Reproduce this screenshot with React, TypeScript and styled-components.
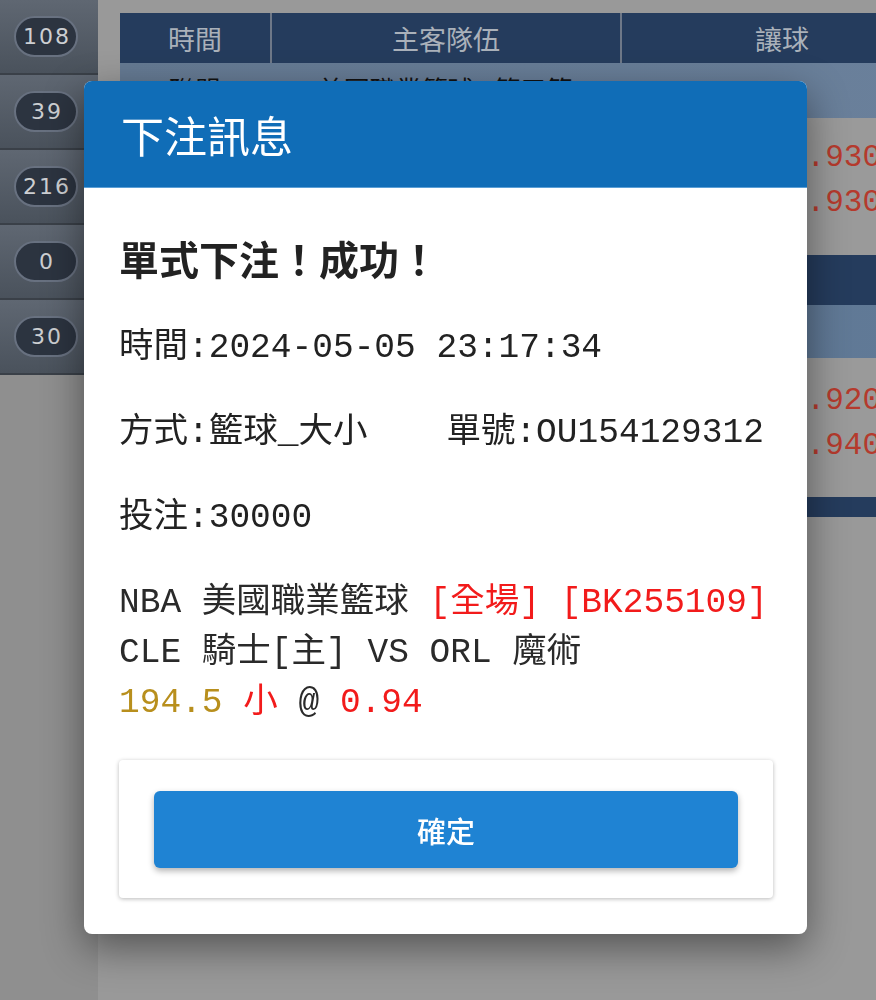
import React from "react";
import styled, { createGlobalStyle } from "styled-components";

const GlobalStyle = createGlobalStyle`
  html, body {
    margin: 0;
    padding: 0;
  }
  body {
    width: 876px;
    height: 1000px;
    overflow: hidden;
    background: #8f8f8f;
    font-family: "Noto Sans CJK TC", "Noto Sans", sans-serif;
  }
`;

const Page = styled.div`
  display: flex;
  height: 1000px;
  background: #8f8f8f;
  overflow: hidden;
`;

const Sidebar = styled.ul`
  list-style: none;
  margin: 0;
  padding: 0 0 2px;
  width: 98px;
  flex-shrink: 0;
  align-self: flex-start;
  display: flex;
  flex-direction: column;
  gap: 2px;
  background: #3a4048;
`;

const SideItem = styled.li`
  height: 73px;
  display: flex;
  align-items: center;
  padding-left: 14px;
  background: linear-gradient(180deg, #5f6772 0%, #4a525c 100%);
`;

const CountPill = styled.span`
  box-sizing: border-box;
  width: 64px;
  height: 41px;
  border-radius: 21px;
  border: 2px solid #687180;
  background: #2c3440;
  color: #cdcfd2;
  font: 22px "DejaVu Sans", sans-serif;
  letter-spacing: 2px;
  padding-left: 2px;
  display: flex;
  align-items: center;
  justify-content: center;
`;

const Main = styled.div`
  flex: 1;
  min-width: 0;
  padding: 13px 0 0 22px;
  background: #999999;
  overflow: hidden;
`;

const Table = styled.div`
  width: 822px;
  display: flex;
  flex-direction: column;
`;

const Row = styled.div<{ $h: number; $bg: string }>`
  height: ${(p) => p.$h}px;
  background: ${(p) => p.$bg};
  display: grid;
  grid-template-columns: 150px 350px 1fr;
`;

const HeadCell = styled.div`
  display: flex;
  align-items: center;
  justify-content: center;
  color: #aab1ba;
  font-size: 27px;
  & + & {
    border-left: 2px solid #6e7888;
  }
`;

const LeagueCell = styled.div`
  display: flex;
  align-items: center;
  justify-content: center;
  color: #111;
  font-size: 26px;
  padding-bottom: 4px;
`;

const OddsCell = styled.div<{ $top: number }>`
  grid-column: 3;
  padding: ${(p) => p.$top}px 0 0 168px;
  display: flex;
  flex-direction: column;
  color: #b53a2d;
  font: 31px/45px "Liberation Mono", monospace;
`;

const Backdrop = styled.div`
  position: fixed;
  inset: 0;
`;

const Dialog = styled.section`
  position: absolute;
  top: 81px;
  left: 84px;
  width: 723px;
  background: #fff;
  border-radius: 8px;
  overflow: hidden;
  box-shadow: 0 14px 40px rgba(0, 0, 0, 0.45);
`;

const DialogHeader = styled.header`
  height: 106px;
  display: flex;
  align-items: center;
  padding-left: 37px;
  background: #106db7;
  border-bottom: 1px solid #5b9fd6;
  color: #fff;
  font-size: 43px;
  font-weight: 400;
`;

const DialogBody = styled.div`
  padding: 45px 34px 36px 35px;
  display: flex;
  flex-direction: column;
  gap: 35px;
`;

const Heading = styled.h2`
  margin: 0 0 5px;
  font-size: 40px;
  line-height: 50px;
  font-weight: 700;
  color: #222;
`;

const Line = styled.div`
  display: flex;
  gap: 79px;
  font: 34.5px/50px "Liberation Mono", "Noto Sans CJK TC", monospace;
  color: #222;
  white-space: pre;
`;

const Detail = styled.div`
  font: 34.5px/50px "Liberation Mono", "Noto Sans CJK TC", monospace;
  color: #2a2a2a;
  white-space: pre;
`;

const Tone = styled.span<{ $c: "red" | "gold" }>`
  color: ${(p) => (p.$c === "red" ? "#f21b1b" : "#b88f1d")};
`;

const ActionCard = styled.div`
  margin-top: -3px;
  padding: 31px 35px 30px;
  background: #fff;
  border-radius: 4px;
  box-shadow: 0 1px 4px rgba(0, 0, 0, 0.28);
`;

const ConfirmButton = styled.button`
  display: block;
  width: 100%;
  height: 77px;
  border: none;
  border-radius: 6px;
  background: #1f83d3;
  color: #fff;
  font-family: "Noto Sans CJK TC", sans-serif;
  font-size: 29px;
  font-weight: 500;
  box-shadow: 0 3px 6px rgba(0, 0, 0, 0.3);
`;

const counts = ["108", "39", "216", "0", "30"];

const App = () => {
  return (
    <>
      <GlobalStyle />
      <Page>
        <Sidebar>
          {counts.map((c) => (
            <SideItem key={c}>
              <CountPill>{c}</CountPill>
            </SideItem>
          ))}
        </Sidebar>
        <Main>
          <Table>
            <Row $h={50} $bg="#253c5d">
              <HeadCell>時間</HeadCell>
              <HeadCell>主客隊伍</HeadCell>
              <HeadCell>讓球</HeadCell>
            </Row>
            <Row $h={55} $bg="linear-gradient(90deg, #657a93, #6a809b)">
              <LeagueCell>聯盟</LeagueCell>
              <LeagueCell>美國職業籃球 - 第三節</LeagueCell>
            </Row>
            <Row $h={137} $bg="#9a9a9a">
              <OddsCell $top={17}>
                <span>0.930</span>
                <span>0.930</span>
              </OddsCell>
            </Row>
            <Row $h={50} $bg="#253c5d" />
            <Row $h={53} $bg="linear-gradient(90deg, #5b728d, #617a97)" />
            <Row $h={139} $bg="#9a9a9a">
              <OddsCell $top={20}>
                <span>0.920</span>
                <span>0.940</span>
              </OddsCell>
            </Row>
            <Row $h={20} $bg="#253c5d" />
          </Table>
        </Main>
      </Page>

      <Backdrop>
        <Dialog>
          <DialogHeader>下注訊息</DialogHeader>
          <DialogBody>
            <Heading>單式下注！成功！</Heading>
            <Line>時間:2024-05-05 23:17:34</Line>
            <Line>
              <span>方式:籃球_大小</span>
              <span>單號:OU154129312</span>
            </Line>
            <Line>投注:30000</Line>
            <Detail>
              <div>
                NBA 美國職業籃球 <Tone $c="red">[全場] [BK255109]</Tone>
              </div>
              <div>CLE 騎士[主] VS ORL 魔術</div>
              <div>
                <Tone $c="gold">194.5</Tone> <Tone $c="red">小</Tone> @ <Tone $c="red">0.94</Tone>
              </div>
            </Detail>
            <ActionCard>
              <ConfirmButton>確定</ConfirmButton>
            </ActionCard>
          </DialogBody>
        </Dialog>
      </Backdrop>
    </>
  );
};

export default App;
